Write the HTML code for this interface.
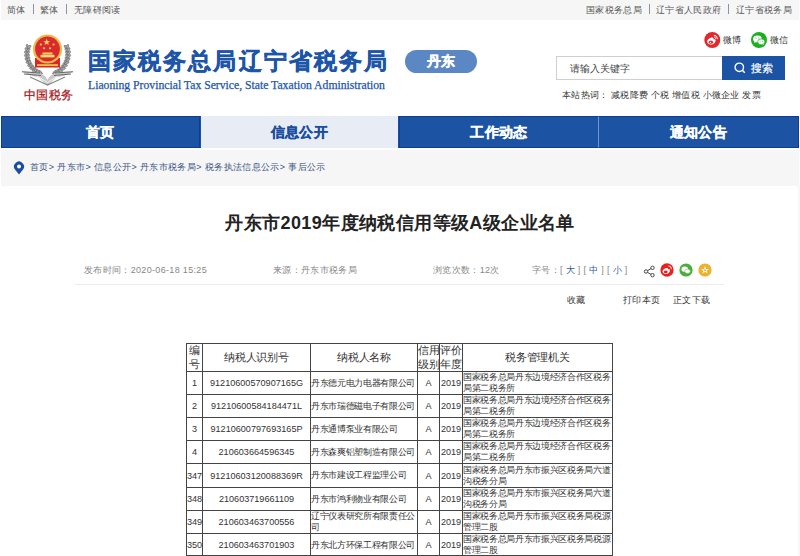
<!DOCTYPE html>
<html><head><meta charset="utf-8">
<style>
*{margin:0;padding:0;box-sizing:border-box}
html,body{width:800px;height:556px;overflow:hidden;background:#fff;font-family:"Liberation Sans",sans-serif;color:#333}
.a{position:absolute;white-space:nowrap}
#topbar{position:absolute;left:1px;top:0;width:798px;height:20px;background:#f6f6f6}
.tl{font-size:9px;letter-spacing:.33px;color:#555;top:4px;line-height:12px}
.sep{color:#8a99b5}
#title{left:88px;top:44px;font-size:23px;letter-spacing:2.1px;font-weight:900;-webkit-text-stroke:.4px #1d56a8;color:#1d56a8;line-height:34px}
#sub{left:88px;top:79px;font-family:"Liberation Serif",serif;font-size:11.7px;color:#1d56a8;-webkit-text-stroke:.25px #1d56a8;line-height:14px}
#pill{left:405px;top:50px;width:72px;height:23px;border-radius:12px;background:#5b87c5;color:#fff;font-size:14px;font-weight:900;-webkit-text-stroke:.3px #fff;text-align:center;line-height:23px}
.soc{font-size:9px;letter-spacing:.33px;color:#333;top:34px;line-height:12px}
#search{position:absolute;left:556px;top:56px;width:167px;height:24px;border:1px solid #cfcfcf;background:#fff}
#sbtn{position:absolute;left:722px;top:56px;width:63px;height:24px;background:#1c54a5}
#nav{position:absolute;left:1px;top:116px;width:798px;height:32px;background:#1c54a3}
.ni{position:absolute;top:0;height:32px;color:#fff;font-size:14px;letter-spacing:.4px;font-weight:900;-webkit-text-stroke:.3px currentColor;text-align:center;line-height:31px;border:1px solid #0a3e98}
#crumb{position:absolute;left:1px;top:150px;width:798px;height:36px;background:#f6f6f6}
.bc{font-size:9px;letter-spacing:.38px;color:#3b5386;top:161px;line-height:12px}
#art{left:0;width:800px;top:210px;text-align:center;font-size:18px;letter-spacing:.4px;font-weight:900;color:#222;line-height:26px}
.meta{font-size:9px;letter-spacing:.33px;color:#888;top:264px;line-height:12px}
.meta b{font-weight:normal;color:#2f5ca8}
#hr{position:absolute;left:75px;top:284px;width:649px;height:1px;background:#ececec}
.act{font-size:9px;letter-spacing:.33px;color:#333;top:294px;line-height:12px}
table{position:absolute;left:186px;top:343px;width:427px;border-collapse:collapse;table-layout:fixed;font-size:9.1px;color:#333}
td,th{border:1px solid #444;text-align:center;vertical-align:middle;padding:0;overflow:visible;white-space:nowrap;font-weight:normal}
th{font-size:11px;letter-spacing:-.33px;line-height:13.5px}
td.l{text-align:left;white-space:normal;line-height:11px;font-size:9px;letter-spacing:-.33px}
</style></head><body>
<div id="topbar"></div>
<div class="a tl" style="left:7px">简体</div>
<div class="a sep" style="left:33px;top:4px;width:1px;height:10px;background:#8792ab"></div>
<div class="a tl" style="left:40px">繁体</div>
<div class="a sep" style="left:66px;top:4px;width:1px;height:10px;background:#8792ab"></div>
<div class="a tl" style="left:74px">无障碍阅读</div>
<div class="a tl" style="left:586px">国家税务总局</div>
<div class="a sep" style="left:649px;top:4px;width:1px;height:10px;background:#8792ab"></div>
<div class="a tl" style="left:656px">辽宁省人民政府</div>
<div class="a sep" style="left:728px;top:4px;width:1px;height:10px;background:#8792ab"></div>
<div class="a tl" style="left:736px">辽宁省税务局</div>

<!-- emblem -->
<svg class="a" style="left:18px;top:30px" width="60" height="75" viewBox="18 30 60 75">
  <g fill="#a9a9a9" stroke="#5e5e5e" stroke-width="0.5">
<ellipse cx="40.1" cy="73.9" rx="2.4" ry="1.1" transform="rotate(-202 40.1 73.9)"/>
<ellipse cx="40.5" cy="72.5" rx="2.4" ry="1.1" transform="rotate(-122 40.5 72.5)"/>
<ellipse cx="37.0" cy="72.5" rx="2.4" ry="1.1" transform="rotate(-193 37.0 72.5)"/>
<ellipse cx="37.7" cy="71.2" rx="2.4" ry="1.1" transform="rotate(-113 37.7 71.2)"/>
<ellipse cx="34.3" cy="70.7" rx="2.4" ry="1.1" transform="rotate(-184 34.3 70.7)"/>
<ellipse cx="35.2" cy="69.4" rx="2.4" ry="1.1" transform="rotate(-104 35.2 69.4)"/>
<ellipse cx="31.8" cy="68.4" rx="2.4" ry="1.1" transform="rotate(-175 31.8 68.4)"/>
<ellipse cx="32.9" cy="67.3" rx="2.4" ry="1.1" transform="rotate(-95 32.9 67.3)"/>
<ellipse cx="29.8" cy="65.8" rx="2.4" ry="1.1" transform="rotate(-166 29.8 65.8)"/>
<ellipse cx="31.0" cy="64.9" rx="2.4" ry="1.1" transform="rotate(-86 31.0 64.9)"/>
<ellipse cx="28.1" cy="62.8" rx="2.4" ry="1.1" transform="rotate(-157 28.1 62.8)"/>
<ellipse cx="29.5" cy="62.1" rx="2.4" ry="1.1" transform="rotate(-77 29.5 62.1)"/>
<ellipse cx="27.0" cy="59.7" rx="2.4" ry="1.1" transform="rotate(-148 27.0 59.7)"/>
<ellipse cx="28.5" cy="59.2" rx="2.4" ry="1.1" transform="rotate(-68 28.5 59.2)"/>
<ellipse cx="26.3" cy="56.4" rx="2.4" ry="1.1" transform="rotate(-139 26.3 56.4)"/>
<ellipse cx="27.9" cy="56.2" rx="2.4" ry="1.1" transform="rotate(-59 27.9 56.2)"/>
<ellipse cx="26.2" cy="53.1" rx="2.4" ry="1.1" transform="rotate(-130 26.2 53.1)"/>
<ellipse cx="27.8" cy="53.1" rx="2.4" ry="1.1" transform="rotate(-50 27.8 53.1)"/>
<ellipse cx="26.6" cy="49.8" rx="2.4" ry="1.1" transform="rotate(-121 26.6 49.8)"/>
<ellipse cx="28.2" cy="50.0" rx="2.4" ry="1.1" transform="rotate(-41 28.2 50.0)"/>
<ellipse cx="27.6" cy="46.6" rx="2.4" ry="1.1" transform="rotate(-112 27.6 46.6)"/>
<ellipse cx="29.0" cy="47.0" rx="2.4" ry="1.1" transform="rotate(-32 29.0 47.0)"/>
<ellipse cx="54.5" cy="72.5" rx="2.4" ry="1.1" transform="rotate(302 54.5 72.5)"/>
<ellipse cx="54.9" cy="73.9" rx="2.4" ry="1.1" transform="rotate(382 54.9 73.9)"/>
<ellipse cx="57.3" cy="71.2" rx="2.4" ry="1.1" transform="rotate(293 57.3 71.2)"/>
<ellipse cx="58.0" cy="72.5" rx="2.4" ry="1.1" transform="rotate(373 58.0 72.5)"/>
<ellipse cx="59.8" cy="69.4" rx="2.4" ry="1.1" transform="rotate(284 59.8 69.4)"/>
<ellipse cx="60.7" cy="70.7" rx="2.4" ry="1.1" transform="rotate(364 60.7 70.7)"/>
<ellipse cx="62.1" cy="67.3" rx="2.4" ry="1.1" transform="rotate(275 62.1 67.3)"/>
<ellipse cx="63.2" cy="68.4" rx="2.4" ry="1.1" transform="rotate(355 63.2 68.4)"/>
<ellipse cx="64.0" cy="64.9" rx="2.4" ry="1.1" transform="rotate(266 64.0 64.9)"/>
<ellipse cx="65.2" cy="65.8" rx="2.4" ry="1.1" transform="rotate(346 65.2 65.8)"/>
<ellipse cx="65.5" cy="62.1" rx="2.4" ry="1.1" transform="rotate(257 65.5 62.1)"/>
<ellipse cx="66.9" cy="62.8" rx="2.4" ry="1.1" transform="rotate(337 66.9 62.8)"/>
<ellipse cx="66.5" cy="59.2" rx="2.4" ry="1.1" transform="rotate(248 66.5 59.2)"/>
<ellipse cx="68.0" cy="59.7" rx="2.4" ry="1.1" transform="rotate(328 68.0 59.7)"/>
<ellipse cx="67.1" cy="56.2" rx="2.4" ry="1.1" transform="rotate(239 67.1 56.2)"/>
<ellipse cx="68.7" cy="56.4" rx="2.4" ry="1.1" transform="rotate(319 68.7 56.4)"/>
<ellipse cx="67.2" cy="53.1" rx="2.4" ry="1.1" transform="rotate(230 67.2 53.1)"/>
<ellipse cx="68.8" cy="53.1" rx="2.4" ry="1.1" transform="rotate(310 68.8 53.1)"/>
<ellipse cx="66.8" cy="50.0" rx="2.4" ry="1.1" transform="rotate(221 66.8 50.0)"/>
<ellipse cx="68.4" cy="49.8" rx="2.4" ry="1.1" transform="rotate(301 68.4 49.8)"/>
<ellipse cx="66.0" cy="47.0" rx="2.4" ry="1.1" transform="rotate(212 66.0 47.0)"/>
<ellipse cx="67.4" cy="46.6" rx="2.4" ry="1.1" transform="rotate(292 67.4 46.6)"/>
  </g>
  <rect x="35" y="58" width="25" height="9.5" fill="#d9262b"/>
  <rect x="37" y="64.2" width="21" height="1.8" fill="#e9c24a"/>
  <circle cx="47.5" cy="49" r="14.6" fill="#e8bd4e"/>
  <circle cx="47.5" cy="49" r="12.4" fill="#dc2a2c"/>
  <g fill="#f6d96c">
    <polygon points="46.7,38.8 47.6,41.2 50.1,41.2 48.1,42.7 48.8,45.1 46.7,43.7 44.6,45.1 45.3,42.7 43.3,41.2 45.8,41.2"/>
    <circle cx="40.8" cy="44.5" r="1.1"/><circle cx="53.6" cy="44.5" r="1.1"/>
    <circle cx="44" cy="48.2" r="1"/><circle cx="50" cy="48.2" r="1"/>
    <rect x="42.5" y="52.5" width="10" height="2"/>
    <rect x="40.5" y="54.8" width="14" height="2.6"/>
  </g>
  <path d="M21.5 71.5 L38 72 L45 76 L47.5 80 L50 76 L57 72 L74 71.5 L66 75 L56 77.5 L47.5 86 L39 77.5 L29 75 Z" fill="#c9c9c9"/>
  <path d="M22 71.8 L40 73 M24 74 L41 75.5 M73 71.8 L55 73 M71 74 L54 75.5" stroke="#6a6a6a" stroke-width="1.1"/>
  <path d="M30 77 L47.5 85 L65 77" stroke="#8a8a8a" stroke-width="1.2" fill="none"/>
  <path d="M37 76 L47.5 82.5 L58 76" stroke="#f2f2f2" stroke-width="1" fill="none"/>
  <text x="48.5" y="99.3" text-anchor="middle" font-family="Liberation Serif, serif" font-weight="normal" font-size="12" fill="#a9161c" stroke="#a9161c" stroke-width=".25" letter-spacing=".5">中国税务</text>
</svg>

<div class="a" id="title">国家税务总局辽宁省税务局</div>
<div class="a" id="sub">Liaoning Provincial Tax Service, State Taxation Administration</div>
<div class="a" id="pill">丹东</div>

<!-- social -->
<svg class="a" style="left:704px;top:32px" width="17" height="17" viewBox="0 0 17 17">
  <circle cx="8.3" cy="8" r="8" fill="#e2282d"/>
  <path d="M3.2 9.8 C3.2 7.6 6 5.6 8.2 5.6 C9.4 5.6 9.6 6.4 9.3 7.3 C10.6 6.9 11.6 7.2 11.6 8.2 C11.8 10.4 9.6 12.6 6.9 12.6 C4.8 12.6 3.2 11.5 3.2 9.8 Z" fill="#fff"/>
  <ellipse cx="6.9" cy="10.2" rx="2.2" ry="1.6" fill="#e2282d"/>
  <circle cx="6.5" cy="10.4" r=".6" fill="#fff"/>
  <path d="M9.9 3.3 A3.6 3.6 0 0 1 13.3 7.1" stroke="#fff" stroke-width="1.1" fill="none"/>
  <path d="M10 5 A1.9 1.9 0 0 1 11.7 6.9" stroke="#fff" stroke-width=".9" fill="none"/>
</svg>
<div class="a soc" style="left:723px">微博</div>
<svg class="a" style="left:751px;top:32px" width="17" height="17" viewBox="0 0 17 17">
  <circle cx="8" cy="8" r="8" fill="#1bb01f"/>
  <ellipse cx="6.4" cy="6.9" rx="4.3" ry="3.4" fill="#fff"/>
  <path d="M3.6 9.6 L3.2 11 L5 10" fill="#fff"/>
  <circle cx="5" cy="6" r=".55" fill="#1bb01f"/><circle cx="7.8" cy="6" r=".55" fill="#1bb01f"/>
  <ellipse cx="10.3" cy="9.8" rx="3.6" ry="2.9" fill="#fff" stroke="#1bb01f" stroke-width=".7"/>
  <path d="M12.3 12.2 L13 13.3 L11.3 12.6" fill="#fff"/>
  <circle cx="9.2" cy="9.2" r=".45" fill="#1bb01f"/><circle cx="11.5" cy="9.2" r=".45" fill="#1bb01f"/>
</svg>
<div class="a soc" style="left:770px">微信</div>

<div id="search"></div>
<div class="a" style="left:570px;top:62px;font-size:10px;color:#444;line-height:13px">请输入关键字</div>
<div id="sbtn"></div>
<svg class="a" style="left:733px;top:61px" width="14" height="14" viewBox="0 0 14 14">
  <circle cx="6.3" cy="6.3" r="4.2" stroke="#fff" stroke-width="1.4" fill="none"/>
  <path d="M9.3 9.3 L11.8 11.8" stroke="#fff" stroke-width="1.5"/>
</svg>
<div class="a" style="left:751px;top:61.5px;font-size:11px;color:#fff;-webkit-text-stroke:.2px #fff;line-height:13px">搜索</div>
<div class="a" style="left:562px;top:89px;font-size:9px;letter-spacing:.25px;color:#333;line-height:12px">本站热词： 减税降费 个税 增值税 小微企业 发票</div>

<div id="nav">
  <div class="ni" style="left:0;width:199px">首页</div>
  <div class="ni" style="left:200px;width:197px;background:#e8ecf5;color:#1b4ea2;border-color:#e8ecf5">信息公开</div>
  <div class="ni" style="left:398px;width:200px">工作动态</div>
  <div class="ni" style="left:597px;width:201px;border-left-color:#6f95cf">通知公告</div>
</div>
<div id="crumb"></div>
<div class="a" style="left:798px;top:186px;width:2px;height:370px;background:#f8f8f8"></div>
<svg class="a" style="left:12.5px;top:161px" width="12" height="14" viewBox="0 0 12 14">
  <path d="M6 13.5 L2 8.6 A5 5 0 1 1 10 8.6 Z" fill="#1a4ea0"/>
  <circle cx="6" cy="5.4" r="2" fill="#fff"/>
</svg>
<div class="a bc" style="left:30px">首页&gt; 丹东市&gt; 信息公开&gt; 丹东市税务局&gt; 税务执法信息公示&gt; 事后公示</div>

<div class="a" id="art">丹东市2019年度纳税信用等级A级企业名单</div>

<div class="a meta" style="left:84px">发布时间：2020-06-18 15:25</div>
<div class="a meta" style="left:273px">来源：丹东市税务局</div>
<div class="a meta" style="left:433px">浏览次数：12次</div>
<div class="a meta" style="left:532px">字号：[ <b>大</b> ] [ <b>中</b> ] [ <b>小</b> ]</div>
<svg class="a" style="left:643px;top:264.5px" width="13" height="13" viewBox="0 0 13 13">
  <circle cx="3" cy="6.5" r="1.7" fill="none" stroke="#444" stroke-width="1"/>
  <circle cx="9.5" cy="2.8" r="1.7" fill="none" stroke="#444" stroke-width="1"/>
  <circle cx="9.5" cy="10.2" r="1.7" fill="none" stroke="#444" stroke-width="1"/>
  <path d="M4.5 5.6 L8 3.7 M4.5 7.4 L8 9.3" stroke="#444" stroke-width="1"/>
</svg>
<svg class="a" style="left:660px;top:263px" width="14" height="14" viewBox="0.3 0 16 16">
  <circle cx="8.3" cy="8" r="7.6" fill="#e8201f"/>
  <path d="M3.2 9.8 C3.2 7.6 6 5.6 8.2 5.6 C9.4 5.6 9.6 6.4 9.3 7.3 C10.6 6.9 11.6 7.2 11.6 8.2 C11.8 10.4 9.6 12.6 6.9 12.6 C4.8 12.6 3.2 11.5 3.2 9.8 Z" fill="#fff"/>
  <ellipse cx="6.9" cy="10.2" rx="2.2" ry="1.6" fill="#e8201f"/>
  <path d="M9.9 3.3 A3.6 3.6 0 0 1 13.3 7.1" stroke="#fff" stroke-width="1.1" fill="none"/>
</svg>
<svg class="a" style="left:679px;top:263px" width="14" height="14" viewBox="0 0 14 14">
  <circle cx="7" cy="7" r="6.6" fill="#4aae39"/>
  <ellipse cx="5.8" cy="6.2" rx="3.3" ry="2.6" fill="#fff"/>
  <ellipse cx="8.5" cy="8.3" rx="2.8" ry="2.2" fill="#fff" stroke="#4aae39" stroke-width="0.5"/>
</svg>
<svg class="a" style="left:698px;top:263px" width="14" height="14" viewBox="0 0 14 14">
  <circle cx="7" cy="7" r="6.6" fill="#f0b12a"/>
  <polygon points="7,3 8,5.9 11,5.9 8.6,7.7 9.5,10.6 7,8.8 4.5,10.6 5.4,7.7 3,5.9 6,5.9" fill="#fff"/><circle cx="7" cy="7.2" r="1" fill="#f0b12a"/>
</svg>
<div id="hr"></div>
<div class="a act" style="left:567px">收藏</div>
<div class="a act" style="left:623px">打印本页</div>
<div class="a act" style="left:673px">正文下载</div>

<table>
<colgroup><col style="width:16px"><col style="width:108px"><col style="width:107px"><col style="width:22px"><col style="width:23px"><col style="width:150px"></colgroup>
<tr style="height:28px"><th>编<br>号</th><th>纳税人识别号</th><th>纳税人名称</th><th>信用<br>级别</th><th>评价<br>年度</th><th>税务管理机关</th></tr>
<tr style="height:23px"><td>1</td><td>91210600570907165G</td><td class="l">丹东德元电力电器有限公司</td><td>A</td><td>2019</td><td class="l">国家税务总局丹东边境经济合作区税务局第二税务所</td></tr>
<tr style="height:23px"><td>2</td><td>91210600584184471L</td><td class="l">丹东市瑞德磁电子有限公司</td><td>A</td><td>2019</td><td class="l">国家税务总局丹东边境经济合作区税务局第二税务所</td></tr>
<tr style="height:23px"><td>3</td><td>91210600797693165P</td><td class="l">丹东通博泵业有限公司</td><td>A</td><td>2019</td><td class="l">国家税务总局丹东边境经济合作区税务局第二税务所</td></tr>
<tr style="height:23px"><td>4</td><td>210603664596345</td><td class="l">丹东森爽铝塑制造有限公司</td><td>A</td><td>2019</td><td class="l">国家税务总局丹东边境经济合作区税务局第二税务所</td></tr>
<tr style="height:24px"><td>347</td><td>91210603120088369R</td><td class="l">丹东市建设工程监理公司</td><td>A</td><td>2019</td><td class="l">国家税务总局丹东市振兴区税务局六道沟税务分局</td></tr>
<tr style="height:23px"><td>348</td><td>210603719661109</td><td class="l">丹东市鸿利物业有限公司</td><td>A</td><td>2019</td><td class="l">国家税务总局丹东市振兴区税务局六道沟税务分局</td></tr>
<tr style="height:23px"><td>349</td><td>210603463700556</td><td class="l">辽宁仪表研究所有限责任公司</td><td>A</td><td>2019</td><td class="l">国家税务总局丹东市振兴区税务局税源管理二股</td></tr>
<tr style="height:22px"><td>350</td><td>210603463701903</td><td class="l">丹东北方环保工程有限公司</td><td>A</td><td>2019</td><td class="l">国家税务总局丹东市振兴区税务局税源管理二股</td></tr>
</table>
<div class="a" style="left:186px;top:555px;width:427px;height:1px;background:#444"></div>
</body></html>
